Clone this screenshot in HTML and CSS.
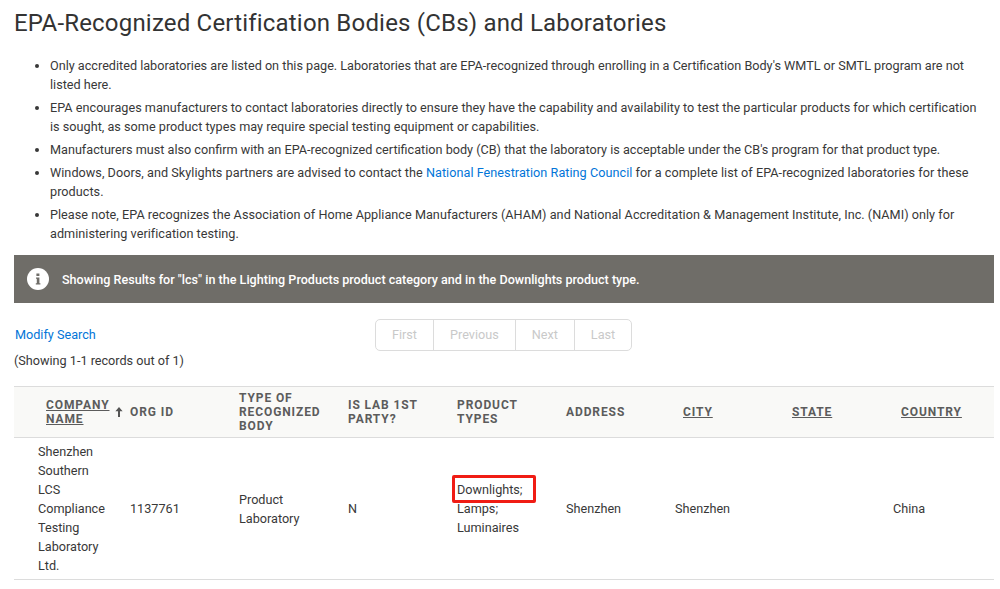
FILE: index.html
```html
<!DOCTYPE html>
<html lang="en">
<head>
<meta charset="utf-8">
<title>EPA-Recognized Certification Bodies (CBs) and Laboratories</title>
<link rel="stylesheet" href="styles.css">
</head>
<body>
<main class="page">
  <h1 class="title">EPA-Recognized Certification Bodies (CBs) and Laboratories</h1>
  <ul class="notes">
    <li>Only accredited laboratories are listed on this page. Laboratories that are EPA-recognized through enrolling in a Certification Body's WMTL or SMTL program are not listed here.</li>
    <li>EPA encourages manufacturers to contact laboratories directly to ensure they have the capability and availability to test the particular products for which certification is sought, as some product types may require special testing equipment or capabilities.</li>
    <li>Manufacturers must also confirm with an EPA-recognized certification body (CB) that the laboratory is acceptable under the CB's program for that product type.</li>
    <li>Windows, Doors, and Skylights partners are advised to contact the <a href="#">National Fenestration Rating Council</a> for a complete list of EPA-recognized laboratories for these products.</li>
    <li>Please note, EPA recognizes the Association of Home Appliance Manufacturers (AHAM) and National Accreditation &amp; Management Institute, Inc. (NAMI) only for administering verification testing.</li>
  </ul>
  <div class="banner">
    <svg class="info" width="22" height="22" viewBox="0 0 22 22" aria-hidden="true">
      <circle cx="11" cy="11" r="11" fill="#fff"/>
      <path d="M9.4 5.6h3v2.4h-3zM9 9.4h3.4v5.8h1v1.4H8.8v-1.4h1v-4.4H9z" fill="#6f6d68"/>
    </svg>
    <span>Showing Results for "lcs" in the Lighting Products product category and in the Downlights product type.</span>
  </div>
  <div class="controls">
    <div class="summary">
      <a href="#">Modify Search</a>
      <p>(Showing 1-1 records out of 1)</p>
    </div>
    <nav class="pager">
      <span class="pg">First</span><span class="pg">Previous</span><span class="pg">Next</span><span class="pg">Last</span>
    </nav>
  </div>
  <table class="results">
    <colgroup>
      <col class="c-a"><col class="c-b"><col class="c-b"><col class="c-b"><col class="c-b"><col class="c-b"><col class="c-b"><col class="c-b"><col class="c-d">
    </colgroup>
    <thead>
      <tr>
        <th class="first"><div class="sorted"><u>COMPANY NAME</u><svg class="arrow" width="8" height="10" viewBox="0 0 8 10" aria-hidden="true"><path d="M4 0 7.6 4.2H5V10H3V4.2H.4z" fill="#555"/></svg></div></th>
        <th>ORG ID</th>
        <th>TYPE OF RECOGNIZED BODY</th>
        <th>IS LAB 1ST PARTY?</th>
        <th>PRODUCT TYPES</th>
        <th>ADDRESS</th>
        <th class="sortable"><u>CITY</u></th>
        <th class="sortable"><u>STATE</u></th>
        <th class="sortable"><u>COUNTRY</u></th>
      </tr>
    </thead>
    <tbody>
      <tr>
        <td class="first">Shenzhen Southern LCS Compliance Testing Laboratory Ltd.</td>
        <td>1137761</td>
        <td>Product Laboratory</td>
        <td>N</td>
        <td><div class="types">Downlights;<br>Lamps;<br>Luminaires<span class="mark"></span></div></td>
        <td>Shenzhen</td>
        <td>Shenzhen</td>
        <td></td>
        <td>China</td>
      </tr>
    </tbody>
  </table>
</main>
</body>
</html>
```
FILE: styles.css
```css
* { box-sizing: border-box; }
html, body { margin: 0; padding: 0; background: #fff; }
body {
  font-family: Roboto, "Liberation Sans", sans-serif;
  font-size: 12.65px;
  line-height: 19px;
  color: #383838;
  overflow: hidden;
}
a { color: #0275d8; text-decoration: none; }
.page { padding: 0 6px 0 14px; }
.title {
  margin: 0;
  padding-top: 7px;
  font-size: 24px;
  line-height: 32px;
  font-weight: 400;
  letter-spacing: 0.19px;
  color: #333;
}
.notes {
  margin: 17px 0 0;
  padding: 0 14px 0 36px;
}
.notes li { margin-bottom: 4px; }
.notes li:nth-child(2) { letter-spacing: 0.02px; }
.notes li:nth-child(4) { letter-spacing: 0.04px; }
.notes li:nth-child(5) { letter-spacing: 0.03px; }
.banner {
  margin-top: 12px;
  height: 48px;
  display: flex;
  align-items: center;
  gap: 13px;
  padding-left: 13px;
  background: #6f6d68;
  color: #fff;
  font-size: 12.58px;
  font-weight: 500;
}
.info { flex: none; }
.controls {
  display: flex;
  margin-top: 16px;
  height: 67px;
}
.summary { width: 361px; padding-top: 6px; }
.summary a { display: block; padding-left: 1px; }
.summary p { margin: 7px 0 0; }
.pager {
  display: flex;
  height: 32px;
  border: 1px solid #dcdcdc;
  border-radius: 5px;
}
.pg {
  display: flex;
  align-items: center;
  padding: 0 16px 1px;
  color: #c9c9c9;
  border-left: 1px solid #dcdcdc;
}
.pg:first-child { border-left: 0; }
.results {
  width: 980px;
  table-layout: fixed;
  border-collapse: collapse;
}
.c-a { width: 107px; }
.c-b { width: 109px; }
.c-d { width: 110px; }
.results th {
  padding: 3px 9px;
  height: 51px;
  background: #f9f9f7;
  border-top: 1px solid #dcdcdc;
  border-bottom: 1px solid #dcdcdc;
  text-align: left;
  font-size: 12px;
  line-height: 14px;
  font-weight: 700;
  letter-spacing: 0.9px;
  color: #5c5c5c;
}
.results th.first { padding: 3px 0 3px 32px; }
.results th.sortable { padding-left: 17px; }
.sorted { display: flex; align-items: center; }
.sorted u { flex: 1; }
.arrow {
  flex: none;
  margin-right: -2px;
}
.results td {
  padding: 4px 9px;
  vertical-align: middle;
  border-bottom: 1px solid #dcdcdc;
}
.results td.first { padding-left: 24px; padding-right: 12px; }
.types { position: relative; }
.mark {
  position: absolute;
  left: -5px;
  top: -5px;
  width: 84px;
  height: 28px;
  border: 3px solid #f01c14;
  border-radius: 2px;
}
```
